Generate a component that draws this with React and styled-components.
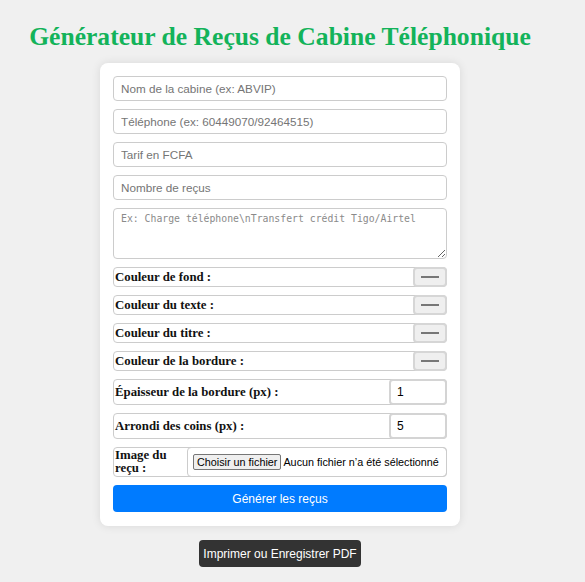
import React from "react";
import styled, { createGlobalStyle } from "styled-components";

const GlobalStyle = createGlobalStyle`
  html, body {
    margin: 0;
    padding: 0;
    background: #f0f0f0;
  }
  body {
    font-family: "Liberation Sans", Arial, sans-serif;
  }
`;

const Page = styled.div`
  width: 560px;
  display: flex;
  flex-direction: column;
  align-items: center;
  padding-bottom: 20px;
`;

const Title = styled.h1`
  margin: 23px 0 12px;
  font-family: "Liberation Serif", Georgia, serif;
  font-size: 25.6px;
  line-height: 28px;
  font-weight: bold;
  color: #13b35a;
  white-space: nowrap;
`;

const Card = styled.div`
  width: 360px;
  box-sizing: border-box;
  background: #fff;
  border-radius: 8px;
  padding: 13px 13px 14px;
  box-shadow: 0 0 10px rgba(0, 0, 0, 0.1);
  display: flex;
  flex-direction: column;
  gap: 8px;
`;

const TextInput = styled.input`
  height: 25px;
  box-sizing: border-box;
  border: 1px solid #ccc;
  border-radius: 4px;
  padding: 0 7px;
  font-family: "Liberation Sans", Arial, sans-serif;
  font-size: 11.7px;
  outline: none;
  &::placeholder {
    color: #757575;
  }
`;

const Notes = styled.textarea`
  height: 51px;
  box-sizing: border-box;
  border: 1px solid #ccc;
  border-radius: 4px;
  padding: 4px 7px;
  font-family: "DejaVu Sans Mono", Consolas, monospace;
  font-size: 9.8px;
  resize: vertical;
  outline: none;
  display: block;
  &::placeholder {
    color: #8a8a8a;
  }
`;

const Row = styled.div`
  display: flex;
  align-items: center;
  justify-content: space-between;
  box-sizing: border-box;
  height: ${(p) => p.$h}px;
  border: 1px solid #ccc;
  border-radius: 4px;
`;

const Label = styled.label`
  font-family: "Liberation Serif", Georgia, serif;
  font-weight: bold;
  font-size: 12.8px;
  color: #111;
  padding-left: 1px;
  line-height: 1;
  width: ${(p) => (p.$w ? `${p.$w}px` : "auto")};
`;

const Swatch = styled.span`
  width: 34px;
  height: 20px;
  box-sizing: border-box;
  margin-right: -1px;
  border: 2px solid #d6d6d6;
  border-radius: 4px;
  background: #efefef;
  display: flex;
  align-items: center;
  justify-content: center;
  &::after {
    content: "";
    width: 18px;
    height: 2px;
    background: #777;
  }
`;

const NumberInput = styled.input`
  width: 58px;
  height: 26px;
  box-sizing: border-box;
  margin-right: -1px;
  border: 2px solid #d4d4d4;
  border-radius: 4px;
  padding: 0 6px;
  font-family: "Liberation Sans", Arial, sans-serif;
  font-size: 12px;
  color: #000;
  outline: none;
`;

const FileBox = styled.div`
  flex: 1;
  align-self: stretch;
  margin: -1px -1px -1px 0;
  border: 1px solid #ccc;
  border-radius: 4px;
  display: flex;
  align-items: center;
  gap: 2px;
  padding-left: 5px;
  font-family: "Liberation Sans", Arial, sans-serif;
  font-size: 10.8px;
  color: #000;
  white-space: nowrap;
  overflow: hidden;
`;

const FileButton = styled.span`
  background: #efefef;
  border: 1px solid #767676;
  border-radius: 2px;
  padding: 0 3px;
  height: 14px;
  line-height: 14px;
`;

const Button = styled.button`
  height: 27px;
  border: none;
  border-radius: 4px;
  background: ${(p) => p.$bg};
  color: #fff;
  font-family: "Liberation Sans", Arial, sans-serif;
  font-size: 12px;
  cursor: pointer;
  padding: 0;
`;

const PrintButton = styled(Button)`
  margin-top: 14px;
  width: 162px;
`;

const colorRows = [
  "Couleur de fond :",
  "Couleur du texte :",
  "Couleur du titre :",
  "Couleur de la bordure :",
];

export default function App() {
  return (
    <>
      <GlobalStyle />
      <Page>
        <Title>Générateur de Reçus de Cabine Téléphonique</Title>
        <Card>
          <TextInput placeholder="Nom de la cabine (ex: ABVIP)" />
          <TextInput placeholder="Téléphone (ex: 60449070/92464515)" />
          <TextInput placeholder="Tarif en FCFA" />
          <TextInput placeholder="Nombre de reçus" />
          <Notes placeholder="Ex: Charge téléphone\nTransfert crédit Tigo/Airtel" />
          {colorRows.map((t) => (
            <Row key={t} $h={20}>
              <Label>{t}</Label>
              <Swatch />
            </Row>
          ))}
          <Row $h={26}>
            <Label>Épaisseur de la bordure (px) :</Label>
            <NumberInput type="number" defaultValue={1} />
          </Row>
          <Row $h={26}>
            <Label>Arrondi des coins (px) :</Label>
            <NumberInput type="number" defaultValue={5} />
          </Row>
          <Row $h={30}>
            <Label $w={72}>Image du reçu :</Label>
            <FileBox>
              <FileButton>Choisir un fichier</FileButton>
              <span>Aucun fichier n’a été sélectionné</span>
            </FileBox>
          </Row>
          <Button $bg="#007bff">Générer les reçus</Button>
        </Card>
        <PrintButton $bg="#333">Imprimer ou Enregistrer PDF</PrintButton>
      </Page>
    </>
  );
}
